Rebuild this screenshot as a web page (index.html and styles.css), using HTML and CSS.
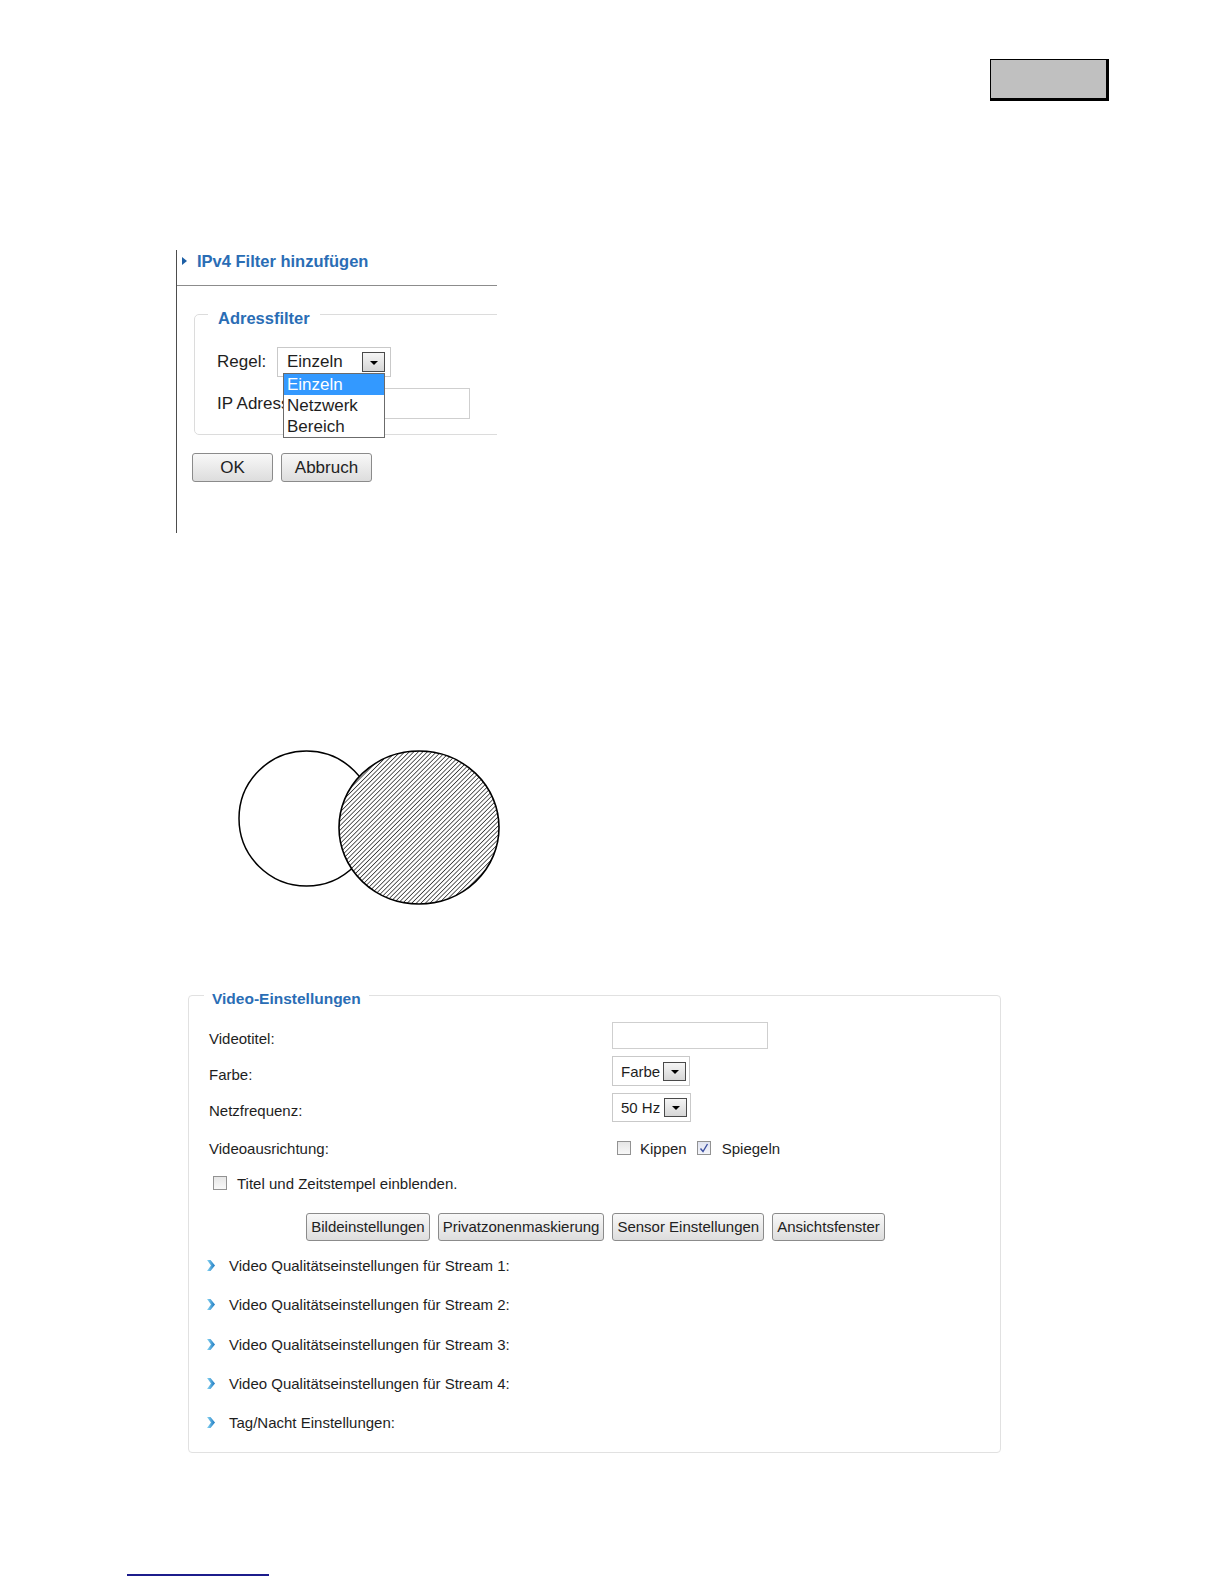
FILE: index.html
```html
<!DOCTYPE html>
<html lang="de">
<head>
  <meta charset="UTF-8" />
  <title>Netzwerk - Filter und Video</title>
  <link rel="stylesheet" href="styles.css">
</head>
<body>
  <div class="tab-box"></div>

  <!-- IPv4 Filter -->
  <div class="ipv4">
    <div class="ipv4-head">
      <span class="tri"></span>
      <h3>IPv4 Filter hinzufügen</h3>
    </div>
    <fieldset class="addr">
      <legend>Adressfilter</legend>
      <div class="addr-row">
        <label>Regel:</label>
        <div class="select select-rule">
          <span>Einzeln</span>
          <span class="drop-btn"></span>
          <ul class="drop-list">
            <li class="sel">Einzeln</li>
            <li>Netzwerk</li>
            <li>Bereich</li>
          </ul>
        </div>
      </div>
      <div class="addr-row">
        <label class="ip-label">IP Adresse:</label>
        <div class="text-input ip-input"></div>
      </div>
    </fieldset>
    <div class="ipv4-buttons">
      <button class="btn btn-ok">OK</button>
      <button class="btn btn-cancel">Abbruch</button>
    </div>
  </div>

  <!-- Venn -->
  <svg class="venn" width="280" height="165" viewBox="0 0 280 165">
    <defs>
      <pattern id="hatch" patternUnits="userSpaceOnUse" width="3.2" height="3.2" patternTransform="rotate(45)">
        <line x1="0" y1="0" x2="0" y2="3.2" stroke="#2b2b2b" stroke-width="1.5" />
      </pattern>
    </defs>
    <circle cx="76.5" cy="73.5" r="67.5" fill="#fff" stroke="#000" stroke-width="1.5" />
    <ellipse cx="189" cy="82.5" rx="80" ry="76.5" fill="#fff" />
    <ellipse cx="189" cy="82.5" rx="80" ry="76.5" fill="url(#hatch)" stroke="#000" stroke-width="1.6" />
  </svg>

  <!-- Video Einstellungen -->
  <fieldset class="video">
    <legend>Video-Einstellungen</legend>
    <div class="vrow">
      <span class="vlabel">Videotitel:</span>
      <div class="text-input title-input"></div>
    </div>
    <div class="vrow">
      <span class="vlabel">Farbe:</span>
      <div class="select select-small">
        <span>Farbe</span>
        <span class="drop-btn"></span>
      </div>
    </div>
    <div class="vrow">
      <span class="vlabel">Netzfrequenz:</span>
      <div class="select select-small select-freq">
        <span>50 Hz</span>
        <span class="drop-btn"></span>
      </div>
    </div>
    <div class="vrow vrow-check">
      <span class="vlabel">Videoausrichtung:</span>
      <div class="checks">
        <span class="check"></span>
        <span class="check-text">Kippen</span>
        <span class="check check-on">
          <svg width="12" height="12" viewBox="0 0 12 12"><path d="M2.5 6.5 L5 9.5 L9.5 2" fill="none" stroke="#3c4fa0" stroke-width="1.4" /></svg>
        </span>
        <span class="check-text">Spiegeln</span>
      </div>
    </div>
    <div class="vrow-single">
      <span class="check"></span>
      <span class="check-text">Titel und Zeitstempel einblenden.</span>
    </div>
    <div class="vbuttons">
      <button class="btn">Bildeinstellungen</button>
      <button class="btn">Privatzonenmaskierung</button>
      <button class="btn">Sensor Einstellungen</button>
      <button class="btn">Ansichtsfenster</button>
    </div>
    <ul class="expand-list">
      <li><svg width="8" height="11" viewBox="0 0 8 11"><defs><linearGradient id="arr" x1="0" y1="0" x2="1" y2="0"><stop offset="0" stop-color="#8ad6f4"/><stop offset="1" stop-color="#1b78c0"/></linearGradient></defs><path d="M0 0 H3.5 L8 5.5 L3.5 11 H0 L4 5.5 Z" fill="url(#arr)" /></svg>Video Qualitätseinstellungen für Stream 1:</li>
      <li><svg width="8" height="11" viewBox="0 0 8 11"><path d="M0 0 H3.5 L8 5.5 L3.5 11 H0 L4 5.5 Z" fill="url(#arr)" /></svg>Video Qualitätseinstellungen für Stream 2:</li>
      <li><svg width="8" height="11" viewBox="0 0 8 11"><path d="M0 0 H3.5 L8 5.5 L3.5 11 H0 L4 5.5 Z" fill="url(#arr)" /></svg>Video Qualitätseinstellungen für Stream 3:</li>
      <li><svg width="8" height="11" viewBox="0 0 8 11"><path d="M0 0 H3.5 L8 5.5 L3.5 11 H0 L4 5.5 Z" fill="url(#arr)" /></svg>Video Qualitätseinstellungen für Stream 4:</li>
      <li><svg width="8" height="11" viewBox="0 0 8 11"><path d="M0 0 H3.5 L8 5.5 L3.5 11 H0 L4 5.5 Z" fill="url(#arr)" /></svg>Tag/Nacht Einstellungen:</li>
    </ul>
  </fieldset>

  <div class="foot-line"></div>
</body>
</html>
```

FILE: styles.css
```css
body {
  margin: 0;
  font-family: "Liberation Sans", Arial, sans-serif;
  color: #1e1e1e;
  background: #fff;
}

.tab-box {
  width: 119px;
  height: 42px;
  box-sizing: border-box;
  margin: 59px 0 0 990px;
  background: #c0c0c0;
  border: 2px solid #000;
  border-left-width: 1.5px;
  border-top-width: 1.5px;
  border-right-width: 3px;
  border-bottom-width: 3px;
}

/* IPv4 filter */
.ipv4 {
  margin: 149px 0 0 176px;
  width: 320px;
  height: 283px;
  border-left: 1px solid #4d4d4d;
  overflow: hidden;
}

.ipv4-head {
  display: flex;
  align-items: flex-start;
  height: 36px;
  box-sizing: border-box;
  padding: 2px 0 0 5px;
  border-bottom: 1px solid #8c8c8c;
}

.tri {
  margin-top: 5px;
  border-left: 5px solid #1d5fa5;
  border-top: 4.5px solid transparent;
  border-bottom: 4.5px solid transparent;
}

.ipv4-head h3 {
  margin: 0 0 0 10px;
  font-size: 16.5px;
  line-height: 18px;
  color: #2a6db5;
}

.addr {
  margin: 15px 0 0 17px;
  width: 400px;
  padding: 20px 0 15px 22px;
  border: 1px solid #dcdcdc;
  border-radius: 5px;
}

.addr legend {
  font-size: 16.5px;
  font-weight: bold;
  line-height: 18px;
  color: #2a6db5;
  padding: 8px 10px 0;
  margin-left: -9px;
}

.addr-row {
  display: flex;
  align-items: center;
  font-size: 17px;
}

.addr-row + .addr-row {
  margin-top: 11px;
}

.addr-row label {
  flex: none;
  width: 60px;
  white-space: nowrap;
}

.addr-row .ip-label {
  width: 66px;
}

.select {
  position: relative;
  display: flex;
  align-items: center;
  justify-content: space-between;
  box-sizing: border-box;
  border: 1px solid #c9c9c9;
  background: #fff;
}

.select-rule {
  width: 114px;
  height: 30px;
  padding: 0 5px 0 9px;
}

.drop-btn {
  display: flex;
  align-items: center;
  justify-content: center;
  width: 23px;
  height: 20px;
  box-sizing: border-box;
  border: 1px solid #4a4a4a;
  background: linear-gradient(#f5f5f5, #d6d6d6);
}

.drop-btn::after {
  content: "";
  margin-top: 2px;
  border-top: 4px solid #000;
  border-left: 4px solid transparent;
  border-right: 4px solid transparent;
}

.drop-list {
  position: absolute;
  left: 5px;
  top: 25px;
  z-index: 2;
  width: 102px;
  margin: 0;
  padding: 0;
  list-style: none;
  box-sizing: border-box;
  border: 1px solid #6b6b6b;
  background: #fff;
}

.drop-list li {
  height: 21px;
  line-height: 21px;
  padding-left: 3px;
}

.drop-list .sel {
  background: #3399ff;
  color: #fff;
}

.text-input {
  position: relative;
  box-sizing: border-box;
  border: 1px solid #cfcfcf;
  background: #fff;
}

.ip-input {
  width: 187px;
  height: 31px;
}

.ipv4-buttons {
  display: flex;
  gap: 8px;
  margin: 18px 0 0 15px;
}

.btn {
  height: 29px;
  padding: 0;
  font-family: inherit;
  font-size: 17px;
  color: #222;
  border: 1px solid #8b8b8b;
  border-radius: 3px;
  background: linear-gradient(#f8f8f8, #dddddd);
}

.btn-ok {
  width: 81px;
}

.btn-cancel {
  width: 91px;
}

/* Venn */
.venn {
  display: block;
  margin: 212px 0 0 230px;
}

/* Video settings */
.video {
  margin: 72px 0 0 188px;
  width: 813px;
  box-sizing: border-box;
  padding: 9px 20px 10px 20px;
  border: 1px solid #e1e1e1;
  border-radius: 4px;
  font-size: 15px;
}

.video legend {
  font-size: 15.5px;
  font-weight: bold;
  line-height: 18px;
  color: #2a6db5;
  padding: 8px 8px 0;
  margin-left: -5px;
}

.vrow {
  display: flex;
  align-items: center;
  height: 36px;
}

.vlabel {
  flex: none;
  width: 403px;
  padding-top: 7px;
}

.title-input {
  width: 156px;
  height: 27px;
}

.select-small {
  width: 78px;
  height: 30px;
  padding: 0 3px 0 8px;
}

.select-small .drop-btn {
  height: 19px;
}

.select-freq {
  width: 79px;
  height: 29px;
}

.vrow-check {
  margin-top: 5px;
}

.vrow-check .vlabel {
  padding-top: 0;
}

.checks {
  display: flex;
  align-items: center;
  padding-left: 5px;
}

.check {
  display: flex;
  align-items: center;
  justify-content: center;
  flex: none;
  width: 14px;
  height: 14px;
  box-sizing: border-box;
  border: 1px solid #929292;
  background: linear-gradient(#e6e6e6, #f8f8f8);
}

.check-text {
  margin-left: 9px;
}

.check-on {
  margin-left: 10px;
  background: linear-gradient(#dfe3f0, #f4f5fa);
}

.check-on + .check-text {
  margin-left: 11px;
}

.vrow-single {
  display: flex;
  align-items: center;
  height: 34px;
  padding-left: 4px;
}

.vrow-single .check-text {
  margin-left: 10px;
}

.vbuttons {
  display: flex;
  justify-content: center;
  gap: 8px;
  margin-top: 12.5px;
  padding-left: 2px;
}

.vbuttons .btn {
  height: 28px;
  padding: 0 4px;
  font-size: 15px;
}

.expand-list {
  list-style: none;
  margin: 5.5px 0 0 -2px;
  padding: 0;
}

.expand-list li {
  display: flex;
  align-items: center;
  height: 39.3px;
}

.expand-list svg {
  margin-right: 14px;
}

.foot-line {
  width: 142px;
  height: 2px;
  margin: 121px 0 0 127px;
  background: #1c1c8c;
}
```
